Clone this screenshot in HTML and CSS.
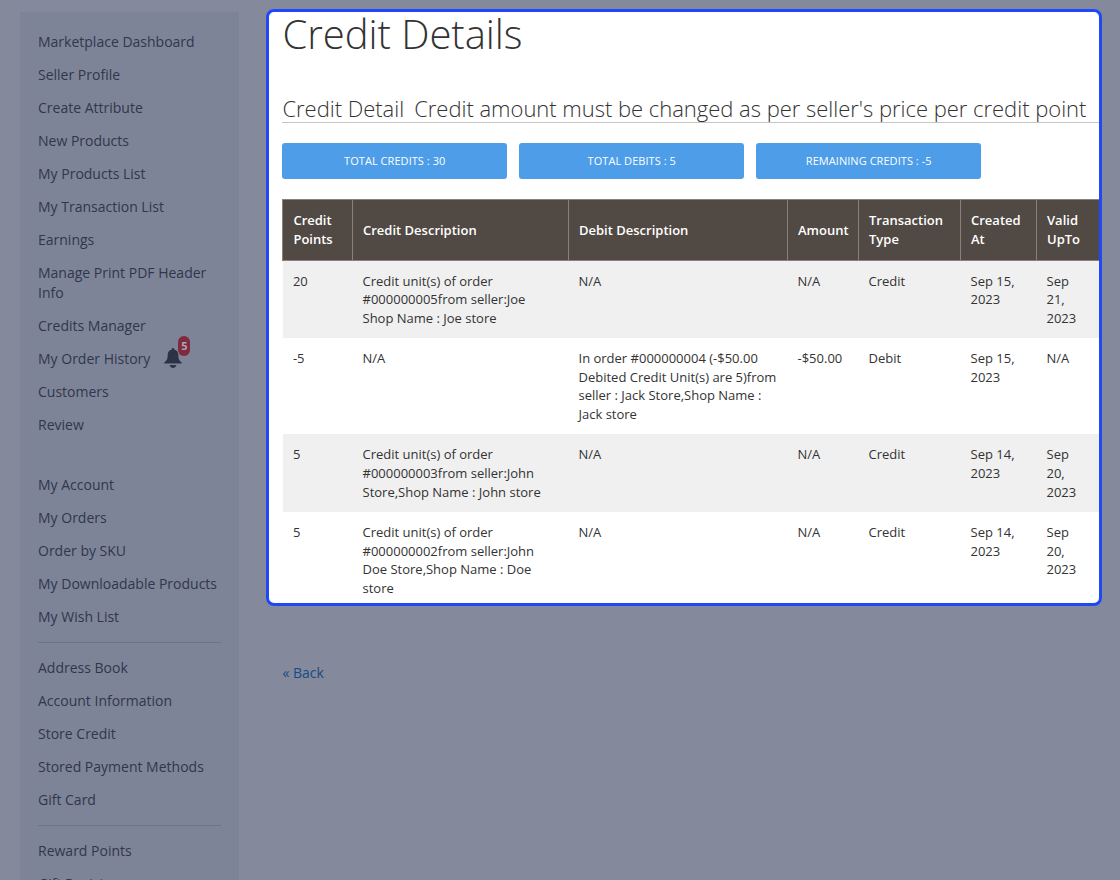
FILE: index.html
```html
<!DOCTYPE html>
<html lang="en">

<head>
    <meta charset="UTF-8">
    <meta name="viewport" content="width=device-width, initial-scale=1.0">
    <title>Credit Details</title>
    <link rel="stylesheet" href="styles.css">
</head>

<body>
    <div class="page">
        <aside class="sidebar">
            <ul class="nav">
                <li><a>Marketplace Dashboard</a></li>
                <li><a>Seller Profile</a></li>
                <li><a>Create Attribute</a></li>
                <li><a>New Products</a></li>
                <li><a>My Products List</a></li>
                <li><a>My Transaction List</a></li>
                <li><a>Earnings</a></li>
                <li><a>Manage Print PDF Header Info</a></li>
                <li><a>Credits Manager</a></li>
                <li>
                    <a>My Order History<span class="bell">
                        <svg width="18" height="20" viewBox="0 0 18 20">
                            <path d="M9 0C8.200 0 7.700.6 7.700 1.500C5 2.200 3.700 4.300 3.700 7C3.700 11 2.900 12.300.3 14.600V15.500H17.700V14.600C15.100 12.300 14.300 11 14.300 7C14.300 4.300 13 2.200 10.300 1.500C10.300.6 9.800 0 9 0Z" />
                            <path d="M5.600 17H12.400C12 18.800 10.800 19.900 9 19.900S6 18.800 5.600 17Z" />
                        </svg>
                        <span class="badge">5</span>
                    </span></a>
                </li>
                <li><a>Customers</a></li>
                <li><a>Review</a></li>
            </ul>
            <ul class="nav">
                <li><a>My Account</a></li>
                <li><a>My Orders</a></li>
                <li><a>Order by SKU</a></li>
                <li><a>My Downloadable Products</a></li>
                <li><a>My Wish List</a></li>
                <li class="delimiter"></li>
                <li><a>Address Book</a></li>
                <li><a>Account Information</a></li>
                <li><a>Store Credit</a></li>
                <li><a>Stored Payment Methods</a></li>
                <li><a>Gift Card</a></li>
                <li class="delimiter"></li>
                <li><a>Reward Points</a></li>
                <li><a>Gift Registry</a></li>
            </ul>
        </aside>

        <main class="main">
            <section class="panel">
                <h1>Credit Details</h1>
                <h2 class="legend"><span>Credit Detail</span><span>Credit amount must be changed as per seller's price per credit point</span></h2>
                <div class="totals">
                    <span class="total">Total Credits : 30</span>
                    <span class="total">Total Debits : 5</span>
                    <span class="total">Remaining Credits : -5</span>
                </div>
                <table class="credits">
                    <colgroup>
                        <col class="col-points">
                        <col class="col-credit">
                        <col class="col-debit">
                        <col class="col-amount">
                        <col class="col-type">
                        <col class="col-created">
                        <col class="col-valid">
                    </colgroup>
                    <thead>
                        <tr>
                            <th>Credit Points</th>
                            <th>Credit Description</th>
                            <th>Debit Description</th>
                            <th>Amount</th>
                            <th>Transaction Type</th>
                            <th>Created At</th>
                            <th>Valid UpTo</th>
                        </tr>
                    </thead>
                    <tbody>
                        <tr>
                            <td>20</td>
                            <td>Credit unit(s) of order #000000005from seller:Joe Shop Name : Joe store</td>
                            <td>N/A</td>
                            <td>N/A</td>
                            <td>Credit</td>
                            <td>Sep 15, 2023</td>
                            <td>Sep 21, 2023</td>
                        </tr>
                        <tr>
                            <td>-5</td>
                            <td>N/A</td>
                            <td>In order #000000004 (-$50.00 Debited Credit Unit(s) are 5)from seller : Jack Store,Shop Name : Jack store</td>
                            <td>-$50.00</td>
                            <td>Debit</td>
                            <td>Sep 15, 2023</td>
                            <td>N/A</td>
                        </tr>
                        <tr>
                            <td>5</td>
                            <td>Credit unit(s) of order #000000003from seller:John Store,Shop Name : John store</td>
                            <td>N/A</td>
                            <td>N/A</td>
                            <td>Credit</td>
                            <td>Sep 14, 2023</td>
                            <td>Sep 20, 2023</td>
                        </tr>
                        <tr>
                            <td>5</td>
                            <td>Credit unit(s) of order #000000002from seller:John Doe Store,Shop Name : Doe store</td>
                            <td>N/A</td>
                            <td>N/A</td>
                            <td>Credit</td>
                            <td>Sep 14, 2023</td>
                            <td>Sep 20, 2023</td>
                        </tr>
                    </tbody>
                </table>
            </section>
            <a class="back">« Back</a>
        </main>
    </div>
</body>

</html>
```
FILE: styles.css
```css
* {
    box-sizing: border-box;
}

body {
    margin: 0;
    height: 880px;
    overflow: hidden;
    background: #84899c;
    color: #333;
    font: 14px/20px "Open Sans", sans-serif;
}

.page {
    display: flex;
    align-items: flex-start;
    padding-left: 20px;
}

/* sidebar */
.sidebar {
    width: 219px;
    height: 900px;
    margin-top: 12px;
    padding-top: 12px;
    background: #7e8497;
    color: #2f374c;
}

.nav {
    margin: 0 0 30px;
    padding: 0;
    list-style: none;
}

.nav li {
    margin-top: 3px;
}

.nav li:first-child {
    margin-top: 0;
}

.nav:first-child {
    padding-top: 3px;
}

.nav a {
    display: block;
    padding: 5px 18px;
}

.nav .delimiter {
    height: 1px;
    margin: 10px 18px;
    background: #6e7388;
}

.bell {
    position: relative;
    display: inline-block;
    width: 18px;
    height: 20px;
    margin: -1px 0 0 14px;
    vertical-align: top;
}

.bell svg {
    display: block;
    fill: #2c3248;
}

.badge {
    position: absolute;
    top: -12px;
    left: 14px;
    width: 12px;
    height: 20px;
    border-radius: 6px;
    background: #82293d;
    color: #a3a8b6;
    font-size: 11px;
    font-weight: 700;
    text-align: center;
}

/* content */
.main {
    margin: 9px 0 0 27px;
}

.panel {
    width: 836px;
    height: 597px;
    padding-left: 13px;
    overflow: hidden;
    border: 3px solid #1f49f6;
    border-radius: 8px;
    background: #fff;
}

h1 {
    margin: 0 0 40px;
    padding-left: .4px;
    font-size: 40px;
    font-weight: 300;
    letter-spacing: -.03px;
    line-height: 44px;
}

.legend {
    display: flex;
    gap: 10px;
    height: 27px;
    margin: 0 0 20px;
    padding-left: .4px;
    border-bottom: 1px solid #c6c6c6;
    font-size: 22px;
    font-weight: 300;
    letter-spacing: -.02px;
    line-height: 25px;
    white-space: nowrap;
}

.totals {
    display: flex;
    gap: 12px;
    margin-bottom: 20px;
}

.total {
    width: 225px;
    padding-left: .5px;
    border-radius: 3px;
    background: #4d9de8;
    color: #fff;
    font-size: 11px;
    letter-spacing: .05px;
    line-height: 36px;
    text-align: center;
    text-transform: uppercase;
}

.credits {
    width: 819px;
    table-layout: fixed;
    border-collapse: collapse;
    font-size: 13px;
    line-height: 18.57px;
}

.col-points { width: 70px; }
.col-credit { width: 216px; }
.col-debit { width: 219px; }
.col-amount { width: 71px; }
.col-type { width: 102px; }
.col-created { width: 76px; }
.col-valid { width: 65px; }

.credits th {
    height: 60.5px;
    padding: 11.2px 10px 10.3px;
    border: 1px solid #8b807b;
    background: #514943;
    color: #fff;
    font-weight: 600;
    line-height: 19px;
    text-align: left;
}

.credits td {
    padding: 11px 10px;
    vertical-align: top;
}

.credits th:first-child,
.credits td:first-child {
    padding-left: 10.4px;
}

.credits th:last-child,
.credits td:last-child {
    padding-right: 18px;
}

.credits tbody tr:nth-child(odd) {
    background: #f0f0f0;
}

.back {
    display: inline-block;
    margin: 57px 0 0 16.4px;
    color: #174b82;
}
```
